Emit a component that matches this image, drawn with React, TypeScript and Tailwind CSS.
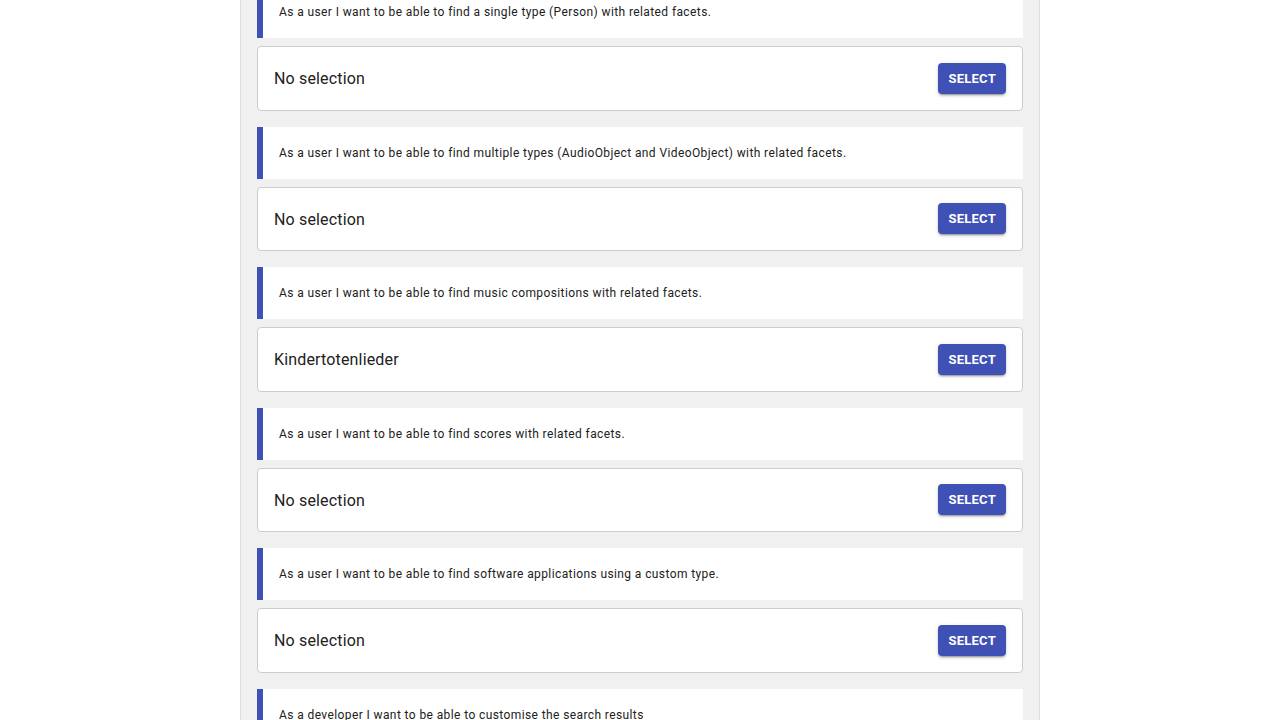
import React from 'react';

const stories = [
  { text: 'As a user I want to be able to find a single type (Person) with related facets.', value: 'No selection' },
  { text: 'As a user I want to be able to find multiple types (AudioObject and VideoObject) with related facets.', value: 'No selection' },
  { text: 'As a user I want to be able to find music compositions with related facets.', value: 'Kindertotenlieder' },
  { text: 'As a user I want to be able to find scores with related facets.', value: 'No selection' },
  { text: 'As a user I want to be able to find software applications using a custom type.', value: 'No selection' },
  { text: 'As a developer I want to be able to customise the search results', value: null },
];

export default function App() {
  return (
    <div className="h-[720px] overflow-hidden bg-white font-['Roboto',sans-serif]">
      <div className="mx-auto w-[800px] h-full flex flex-col bg-[#f0f0f0] border-x border-[#dcdcdc] px-4">
        <div className="-mt-[14px] flex flex-col gap-4">
          {stories.map((s, i) => (
            <div key={i} className="flex flex-col gap-2">
              {/* user story */}
              <div className="h-[52px] flex items-center bg-white border-l-[6px] border-[#3f51b5] pl-4">
                <p className="text-[12px] tracking-[0.033em] text-[#212121]">{s.text}</p>
              </div>
              {/* selection card */}
              {s.value !== null && (
                <div className="h-[64.5px] flex items-center justify-between bg-white border border-[#cccccc] rounded px-4">
                  <span className="pt-[2px] text-base text-[#212121] tracking-[0.01em]">{s.value}</span>
                  <button className="h-[31px] px-[10px] rounded bg-[#3f51b5] text-white text-[13px] font-bold tracking-[0.02em] uppercase shadow-[0_3px_1px_-2px_rgba(0,0,0,0.2),0_2px_2px_0_rgba(0,0,0,0.14),0_1px_5px_0_rgba(0,0,0,0.12)]">
                    Select
                  </button>
                </div>
              )}
            </div>
          ))}
        </div>
      </div>
    </div>
  );
}
